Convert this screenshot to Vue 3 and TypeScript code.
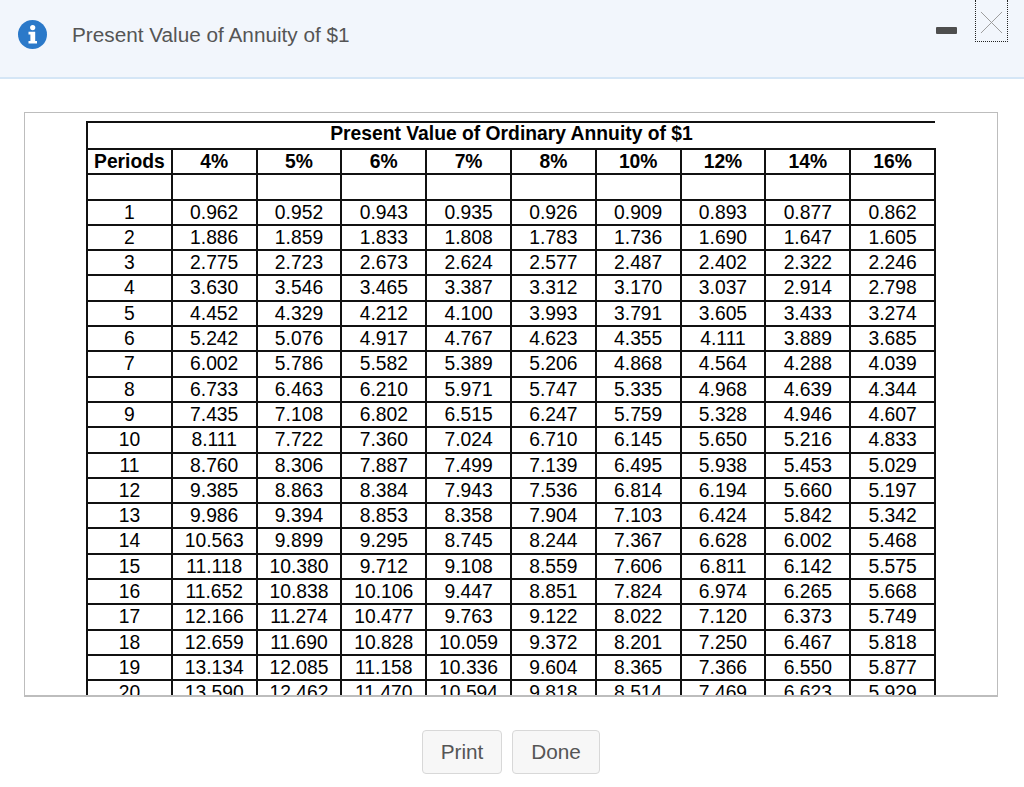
<script setup lang="ts">
const rates = ['4%', '5%', '6%', '7%', '8%', '10%', '12%', '14%', '16%']

const rows: string[][] = [
  ['0.962', '0.952', '0.943', '0.935', '0.926', '0.909', '0.893', '0.877', '0.862'],
  ['1.886', '1.859', '1.833', '1.808', '1.783', '1.736', '1.690', '1.647', '1.605'],
  ['2.775', '2.723', '2.673', '2.624', '2.577', '2.487', '2.402', '2.322', '2.246'],
  ['3.630', '3.546', '3.465', '3.387', '3.312', '3.170', '3.037', '2.914', '2.798'],
  ['4.452', '4.329', '4.212', '4.100', '3.993', '3.791', '3.605', '3.433', '3.274'],
  ['5.242', '5.076', '4.917', '4.767', '4.623', '4.355', '4.111', '3.889', '3.685'],
  ['6.002', '5.786', '5.582', '5.389', '5.206', '4.868', '4.564', '4.288', '4.039'],
  ['6.733', '6.463', '6.210', '5.971', '5.747', '5.335', '4.968', '4.639', '4.344'],
  ['7.435', '7.108', '6.802', '6.515', '6.247', '5.759', '5.328', '4.946', '4.607'],
  ['8.111', '7.722', '7.360', '7.024', '6.710', '6.145', '5.650', '5.216', '4.833'],
  ['8.760', '8.306', '7.887', '7.499', '7.139', '6.495', '5.938', '5.453', '5.029'],
  ['9.385', '8.863', '8.384', '7.943', '7.536', '6.814', '6.194', '5.660', '5.197'],
  ['9.986', '9.394', '8.853', '8.358', '7.904', '7.103', '6.424', '5.842', '5.342'],
  ['10.563', '9.899', '9.295', '8.745', '8.244', '7.367', '6.628', '6.002', '5.468'],
  ['11.118', '10.380', '9.712', '9.108', '8.559', '7.606', '6.811', '6.142', '5.575'],
  ['11.652', '10.838', '10.106', '9.447', '8.851', '7.824', '6.974', '6.265', '5.668'],
  ['12.166', '11.274', '10.477', '9.763', '9.122', '8.022', '7.120', '6.373', '5.749'],
  ['12.659', '11.690', '10.828', '10.059', '9.372', '8.201', '7.250', '6.467', '5.818'],
  ['13.134', '12.085', '11.158', '10.336', '9.604', '8.365', '7.366', '6.550', '5.877'],
  ['13.590', '12.462', '11.470', '10.594', '9.818', '8.514', '7.469', '6.623', '5.929'],
]
</script>

<template>
  <div class="page">
    <header class="head">
      <svg class="info" viewBox="0 0 29 29" aria-hidden="true">
        <circle cx="14.5" cy="14.5" r="14.5" fill="#2b79c9" />
        <circle cx="14.7" cy="7.6" r="2.6" fill="#fff" />
        <path d="M10.5 11.8h6.7v9.2h1.8v2.6h-8.5V21h1.9v-6.6h-1.9z" fill="#fff" />
      </svg>
      <span class="title">Present Value of Annuity of $1</span>
      <span class="minimize"></span>
      <span class="close">
        <svg viewBox="0 0 24 24" aria-hidden="true">
          <path d="M1 1l22 22M23 1L1 23" stroke="#999" stroke-width="1" fill="none" />
        </svg>
      </span>
    </header>

    <div class="frame">
      <table class="annuity">
        <tbody>
          <tr class="caption-row">
            <th colspan="10">Present Value of Ordinary Annuity of $1</th>
          </tr>
          <tr>
            <th>Periods</th>
            <th v-for="r in rates" :key="r">{{ r }}</th>
          </tr>
          <tr>
            <td></td>
            <td v-for="r in rates" :key="r"></td>
          </tr>
          <tr v-for="(row, i) in rows" :key="i">
            <td>{{ i + 1 }}</td>
            <td v-for="(v, j) in row" :key="j">{{ v }}</td>
          </tr>
        </tbody>
      </table>
    </div>

    <footer class="actions">
      <button class="btn print">Print</button>
      <button class="btn done">Done</button>
    </footer>
  </div>
</template>

<style scoped>
.page {
  width: 1024px;
  height: 787px;
  overflow: hidden;
  background: #fff;
  font-family: "Liberation Sans", Arial, sans-serif;
}
.head {
  height: 77px;
  display: flex;
  align-items: center;
  padding: 0 16px 0 18px;
  background: #f2f6fc;
  border-bottom: 2px solid #d5e6f6;
}
.info { width: 29px; height: 29px; margin-top: -9px; flex: none; }
.title {
  flex: 1;
  margin-left: 25px;
  margin-top: -8px;
  font-size: 20.75px;
  color: #555;
}
.minimize {
  width: 21px;
  height: 7px;
  margin-top: -16px;
  margin-right: 18px;
  border-radius: 1px;
  background: #4e4e4e;
}
.close {
  align-self: flex-start;
  width: 33px;
  height: 42px;
  box-sizing: border-box;
  display: flex;
  align-items: flex-start;
  justify-content: center;
  padding-top: 11px;
  border: 1px dotted #222;
  border-top: none;
}
.close svg { width: 23px; height: 23px; }
.frame {
  height: 574px;
  margin: 33px 26px 0 24px;
  padding: 8px 0 0 61px;
  border: 1px solid #bdbdbd;
  border-bottom-width: 2px;
  overflow: hidden;
}
.annuity {
  width: 850px;
  table-layout: fixed;
  border-collapse: collapse;
  font-size: 19.3px;
  color: #000;
}
.annuity th, .annuity td {
  height: 25.3px;
  padding: 0;
  text-align: center;
  border: 2px solid #111;
  box-sizing: border-box;
  line-height: 1;
  white-space: nowrap;
}
.annuity th { font-weight: 700; }
.caption-row th {
  height: 27px;
  padding-bottom: 4px;
  border-right: none;
}
.actions {
  display: flex;
  justify-content: center;
  gap: 10px;
  padding: 33px 2px 0 0;
}
.btn {
  height: 44px;
  padding: 0;
  border: 1.5px solid #d8d8d8;
  border-radius: 4px;
  background: #f7f7f7;
  color: #555;
  font-family: inherit;
  font-size: 20.75px;
}
.print { width: 80px; }
.done { width: 88px; }
</style>
